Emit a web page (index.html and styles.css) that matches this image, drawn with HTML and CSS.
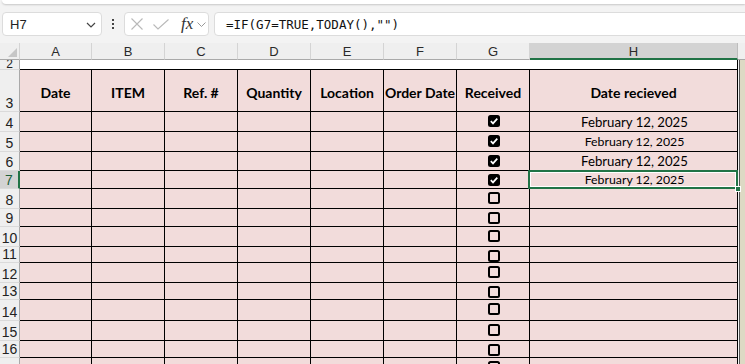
FILE: index.html
```html
<!DOCTYPE html>
<html>
<head>
<meta charset="utf-8">
<link rel="stylesheet" href="styles.css">
</head>
<body>
<div class="top">
  <div class="ribbon"></div>
  <div class="fbar">
    <div class="namebox">
      <span class="ref">H7</span>
      <svg class="chev" width="10" height="6" viewBox="0 0 10 6"><path d="M1 1 L5 5 L9 1" fill="none" stroke="#444" stroke-width="1.2"/></svg>
    </div>
    <div class="dots"><i></i><i></i><i></i></div>
    <div class="fxbox">
      <svg width="12" height="12" viewBox="0 0 12 12"><path d="M0.5 0.5 L11.5 11.5 M11.5 0.5 L0.5 11.5" stroke="#b9b9b9" stroke-width="1.1" fill="none"/></svg>
      <svg class="ok" width="16" height="11" viewBox="0 0 16 11"><path d="M0.5 5.5 L5 10 L15.5 0.5" stroke="#b9b9b9" stroke-width="1.1" fill="none"/></svg>
      <span class="fx">fx</span>
      <svg class="chev2" width="9" height="5" viewBox="0 0 9 5"><path d="M0.5 0.5 L4.5 4.5 L8.5 0.5" fill="none" stroke="#999" stroke-width="1"/></svg>
    </div>
    <div class="formula">=IF(G7=TRUE,TODAY(),"")</div>
  </div>
</div>

<div class="sheet">
  <!-- column headers -->
  <div class="corner"><span class="tri"></span></div>
  <div class="ch">A</div><div class="ch">B</div><div class="ch">C</div><div class="ch">D</div><div class="ch">E</div><div class="ch">F</div><div class="ch">G</div><div class="ch sel">H</div><div class="ch last"></div>

  <!-- row 2 -->
  <div class="rh r2"><span class="n2">2</span></div>
  <div class="w"></div><div class="w"></div><div class="w"></div><div class="w"></div><div class="w"></div><div class="w"></div><div class="w"></div><div class="w hcol"></div><div class="i"></div>

  <!-- row 3 -->
  <div class="rh">3</div>
  <div class="c hd">Date</div><div class="c hd">ITEM</div><div class="c hd">Ref. #</div><div class="c hd">Quantity</div><div class="c hd">Location</div><div class="c hd">Order Date</div><div class="c hd">Received</div><div class="c hd">Date recieved</div><div class="i"></div>

  <!-- row 4 -->
  <div class="rh">4</div>
  <div class="c"></div><div class="c"></div><div class="c"></div><div class="c"></div><div class="c"></div><div class="c"></div>
  <div class="c g"><span class="cb on"><svg width="12" height="12" viewBox="0 0 12 12"><path d="M2.8 6.2 L5 8.4 L9.3 3.6" fill="none" stroke="#fff" stroke-width="1.7"/></svg></span></div>
  <div class="c dt big">February 12, 2025</div><div class="i"></div>

  <!-- row 5 -->
  <div class="rh">5</div>
  <div class="c"></div><div class="c"></div><div class="c"></div><div class="c"></div><div class="c"></div><div class="c"></div>
  <div class="c g"><span class="cb on"><svg width="12" height="12" viewBox="0 0 12 12"><path d="M2.8 6.2 L5 8.4 L9.3 3.6" fill="none" stroke="#fff" stroke-width="1.7"/></svg></span></div>
  <div class="c dt small">February 12, 2025</div><div class="i"></div>

  <!-- row 6 -->
  <div class="rh">6</div>
  <div class="c"></div><div class="c"></div><div class="c"></div><div class="c"></div><div class="c"></div><div class="c"></div>
  <div class="c g"><span class="cb on"><svg width="12" height="12" viewBox="0 0 12 12"><path d="M2.8 6.2 L5 8.4 L9.3 3.6" fill="none" stroke="#fff" stroke-width="1.7"/></svg></span></div>
  <div class="c dt big">February 12, 2025</div><div class="i"></div>

  <!-- row 7 -->
  <div class="rh sel">7</div>
  <div class="c"></div><div class="c"></div><div class="c"></div><div class="c"></div><div class="c"></div><div class="c"></div>
  <div class="c g"><span class="cb on"><svg width="12" height="12" viewBox="0 0 12 12"><path d="M2.8 6.2 L5 8.4 L9.3 3.6" fill="none" stroke="#fff" stroke-width="1.7"/></svg></span></div>
  <div class="c dt small active">February 12, 2025<span class="selbox"></span><span class="handle"></span></div><div class="i"></div>

  <!-- rows 8-17 -->
  <div class="rh">8</div>
  <div class="c"></div><div class="c"></div><div class="c"></div><div class="c"></div><div class="c"></div><div class="c"></div><div class="c g"><span class="cb"></span></div><div class="c"></div><div class="i"></div>
  <div class="rh">9</div>
  <div class="c"></div><div class="c"></div><div class="c"></div><div class="c"></div><div class="c"></div><div class="c"></div><div class="c g"><span class="cb"></span></div><div class="c"></div><div class="i"></div>
  <div class="rh">10</div>
  <div class="c"></div><div class="c"></div><div class="c"></div><div class="c"></div><div class="c"></div><div class="c"></div><div class="c g"><span class="cb"></span></div><div class="c"></div><div class="i"></div>
  <div class="rh">11</div>
  <div class="c"></div><div class="c"></div><div class="c"></div><div class="c"></div><div class="c"></div><div class="c"></div><div class="c g"><span class="cb"></span></div><div class="c"></div><div class="i"></div>
  <div class="rh">12</div>
  <div class="c"></div><div class="c"></div><div class="c"></div><div class="c"></div><div class="c"></div><div class="c"></div><div class="c g"><span class="cb"></span></div><div class="c"></div><div class="i"></div>
  <div class="rh">13</div>
  <div class="c"></div><div class="c"></div><div class="c"></div><div class="c"></div><div class="c"></div><div class="c"></div><div class="c g"><span class="cb"></span></div><div class="c"></div><div class="i"></div>
  <div class="rh">14</div>
  <div class="c"></div><div class="c"></div><div class="c"></div><div class="c"></div><div class="c"></div><div class="c"></div><div class="c g"><span class="cb"></span></div><div class="c"></div><div class="i"></div>
  <div class="rh">15</div>
  <div class="c"></div><div class="c"></div><div class="c"></div><div class="c"></div><div class="c"></div><div class="c"></div><div class="c g"><span class="cb"></span></div><div class="c"></div><div class="i"></div>
  <div class="rh">16</div>
  <div class="c"></div><div class="c"></div><div class="c"></div><div class="c"></div><div class="c"></div><div class="c"></div><div class="c g"><span class="cb"></span></div><div class="c"></div><div class="i"></div>
  <div class="rh"></div>
  <div class="c"></div><div class="c"></div><div class="c"></div><div class="c"></div><div class="c"></div><div class="c"></div><div class="c g"><span class="cb"></span></div><div class="c"></div><div class="i"></div>
</div>
</body>
</html>
```

FILE: styles.css
```css
* { box-sizing: border-box; }
html, body { margin: 0; padding: 0; }
body {
  width: 745px;
  height: 364px;
  overflow: hidden;
  background: #f3f3f3;
  font-family: "Liberation Sans", Arial, sans-serif;
}

/* ---------- top formula bar ---------- */
.top {
  height: 43px;
  background: #f3f3f3;
}
.ribbon {
  height: 4px;
  margin-left: 2px;
  background: #fff;
  border-radius: 0 0 0 6px;
  box-shadow: 0 1px 2px rgba(0,0,0,0.18);
}
.fbar {
  display: flex;
  align-items: center;
  margin-top: 8px;
  height: 24px;
  padding-left: 2px;
}
.namebox {
  width: 100px;
  height: 24px;
  background: #fff;
  border: 1px solid #dcdcdc;
  border-radius: 4px;
  display: flex;
  align-items: center;
  justify-content: space-between;
  padding: 0 5px 0 7px;
}
.ref { font-size: 13px; color: #222; }
.chev { margin-top: 1px; }
.dots {
  width: 22px;
  display: flex;
  flex-direction: column;
  align-items: center;
  gap: 2px;
}
.dots i {
  display: block;
  width: 2px;
  height: 2px;
  background: #444;
}
.fxbox {
  width: 85px;
  height: 24px;
  background: #fff;
  border: 1px solid #dcdcdc;
  border-radius: 4px;
  display: flex;
  align-items: center;
  padding-left: 6px;
}
.fxbox .ok { margin-left: 10px; }
.fx {
  font-family: "Liberation Serif", "Times New Roman", serif;
  font-style: italic;
  font-size: 17px;
  color: #333;
  margin-left: 12px;
  line-height: 1;
  margin-top: -2px;
}
.chev2 { margin-left: 4px; }
.formula {
  flex: 1;
  margin-left: 5px;
  margin-right: -12px;
  height: 24px;
  background: #fff;
  border: 1px solid #dcdcdc;
  border-radius: 4px;
  padding-left: 11px;
  display: flex;
  align-items: center;
  font-family: "DejaVu Sans Mono", "Liberation Mono", monospace;
  font-size: 12.5px;
  color: #111;
}

/* ---------- sheet grid ---------- */
.sheet {
  display: grid;
  grid-template-columns: 20px 72px 73px 73px 73px 73px 73px 73px 208px 1fr;
  grid-template-rows: 17px 10px 42px 20px 20px 19px 18px 20px 18px 20px 16px 20px 17px 21px 20px 17px 20px;
  background: #fff;
}
.corner {
  background: #efefef;
  border-right: 1px solid #d4d4d4;
  border-bottom: 1px solid #a9a9a9;
  position: relative;
}
.tri {
  position: absolute;
  left: 8px;
  top: 5px;
  width: 9px;
  height: 9px;
  background: #c6c6c6;
  clip-path: polygon(100% 0, 100% 100%, 0 100%);
}
.ch {
  background: #efefef;
  border-right: 1px solid #d4d4d4;
  border-bottom: 1px solid #a9a9a9;
  font-size: 13px;
  color: #2a2a2a;
  display: flex;
  align-items: center;
  justify-content: center;
  padding-top: 1px;
}
.ch.sel {
  background: #d3d3d3;
  border-bottom: 2px solid #217346;
  border-right: 1px solid #bdbdbd;
}
.ch.last { border-right: none; }

.rh {
  background: #efefef;
  border-right: 1px solid #a9a9a9;
  border-bottom: 1px solid #dadada;
  font-size: 14px;
  line-height: 1;
  color: #222;
  display: flex;
  align-items: flex-end;
  justify-content: center;
  padding-bottom: 1px;
  overflow: hidden;
}
.rh.r2 {
  overflow: visible;
  padding-bottom: 0;
  align-items: center;
}
.n2 {
  font-size: 12px;
  line-height: 9px;
  height: 9px;
  display: block;
}
.rh.sel {
  background: #d3d3d3;
  border-right: 2px solid #217346;
  color: #1d5e3a;
}

.w {
  background: #fff;
  border-bottom: 1px solid #000;
}
.w.hcol { border-right: 1px solid #000; }

.c {
  background: #f2dcdb;
  border-right: 1px solid #000;
  border-bottom: 1px solid #000;
  font-family: Lato, "Open Sans", sans-serif;
  color: #000;
}
.c.hd {
  display: flex;
  align-items: center;
  justify-content: center;
  font-weight: 700;
  font-size: 14px;
  padding-top: 3px;
  white-space: nowrap;
}
.c.g {
  display: flex;
  justify-content: center;
  align-items: flex-start;
  padding-top: 3px;
  padding-left: 1px;
}
.cb {
  display: block;
  width: 12px;
  height: 12px;
  border: 2px solid #000;
  border-radius: 2.5px;
}
.cb.on {
  border: none;
  background: #000;
}
.cb svg { display: block; }
.c.dt {
  display: flex;
  align-items: center;
  justify-content: center;
  white-space: nowrap;
  padding-left: 2px;
}
.c.dt.big { font-size: 13.2px; }
.c.dt.small { font-size: 12.3px; }

.c.active { position: relative; }
.selbox {
  position: absolute;
  left: -2px;
  top: -1px;
  right: -1px;
  bottom: -1px;
  border: 2px solid #217346;
  box-shadow: inset 0 0 0 1px #fff;
}
.handle {
  position: absolute;
  right: -4px;
  bottom: -4px;
  width: 6px;
  height: 6px;
  background: #217346;
  border: 1px solid #fff;
}

.i {
  background: #ddd9c4;
  border-left: 1px solid #f4f4f4;
  box-shadow: inset 1px 0 0 #555;
}
```
